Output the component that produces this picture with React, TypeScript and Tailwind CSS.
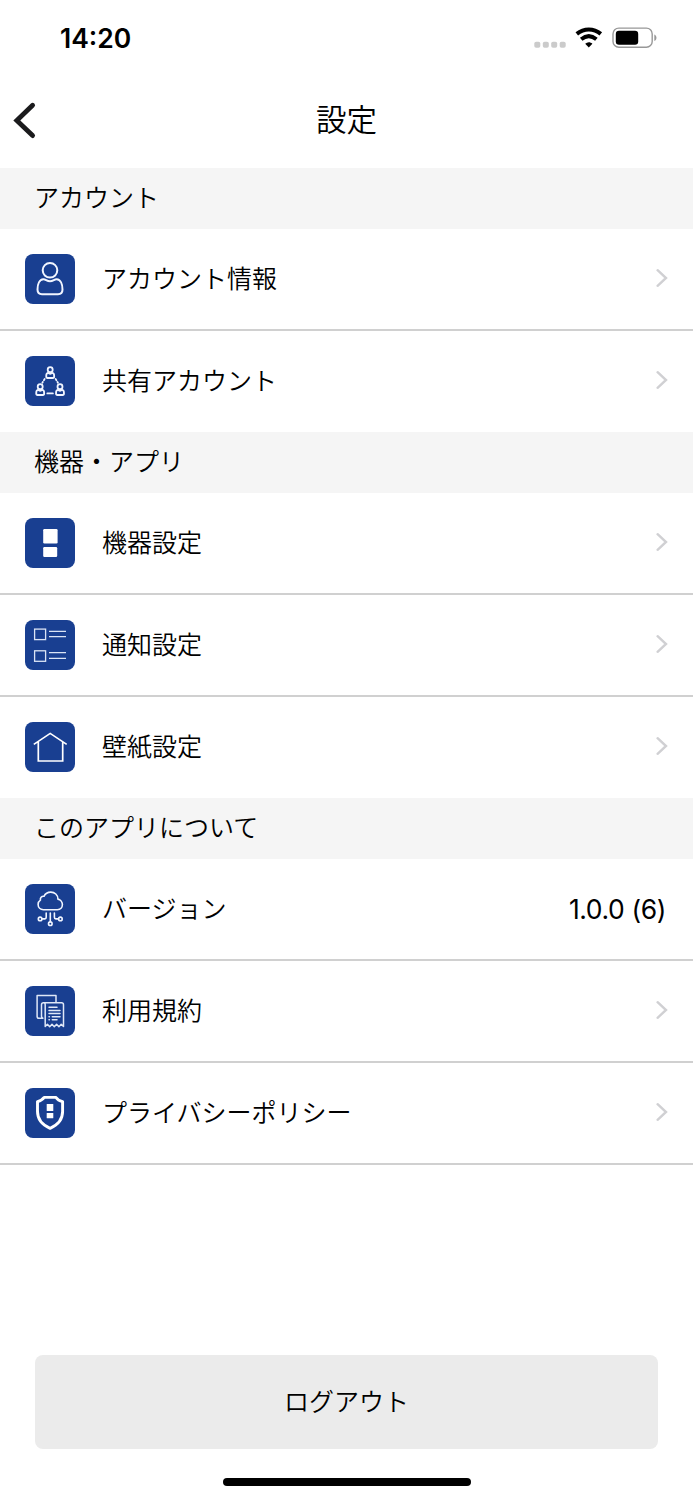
import type { ReactNode } from "react";

const line = {
  fill: "none",
  stroke: "#f1f5ff",
  strokeLinecap: "round" as const,
  strokeLinejoin: "round" as const,
};

function Tile({ children }: { children: ReactNode }) {
  return (
    <svg className="size-[50px] shrink-0 rounded-[8px] bg-[#193f91]" viewBox="0 0 50 50">
      {children}
    </svg>
  );
}

function UserIcon() {
  return (
    <Tile>
      <g {...line} strokeWidth="2">
        <circle cx="25" cy="16.3" r="7.3" />
        <path d="M18.3 25.2C14.5 25.5 12.5 30 12.5 35.5C12.5 38.8 14.1 40.2 17 40.2H33C35.9 40.2 37.5 38.8 37.5 35.5C37.5 30 35.5 25.5 31.7 25.2C29.3 25.1 28.3 27.3 25 27.3C21.7 27.3 20.7 25.1 18.3 25.2Z" />
      </g>
    </Tile>
  );
}

function MiniUser({ x, y }: { x: number; y: number }) {
  return (
    <g transform={`translate(${x} ${y})`}>
      <circle cx="0" cy="0" r="2.5" />
      <path d="M-2.3 3.2C-3.5 3.4-4 4.9-4 6.6C-4 7.9-3.6 8.3-2.6 8.3H2.6C3.6 8.3 4 7.9 4 6.6C4 4.9 3.5 3.4 2.3 3.2C1.5 3.2 1.1 4.1 0 4.1C-1.1 4.1-1.5 3.2-2.3 3.2Z" />
    </g>
  );
}

function SharedIcon() {
  return (
    <Tile>
      <g {...line} strokeWidth="1.8">
        <MiniUser x={25.2} y={13.7} />
        <MiniUser x={15.2} y={30.7} />
        <MiniUser x={35} y={30.7} />
        <path d="M19.7 22.9L18.9 24.2M17.8 26L17.4 26.7M30.6 22.9L31.4 24.2M32.5 26L32.9 26.7M22.3 37.4H27.9" />
      </g>
    </Tile>
  );
}

function DeviceIcon() {
  return (
    <Tile>
      <rect x="18.2" y="11" width="14.4" height="14.4" rx="1.2" fill="#fff" />
      <rect x="18.2" y="29" width="14" height="10" rx="1.2" fill="#fff" />
    </Tile>
  );
}

function NoticeIcon() {
  return (
    <Tile>
      <g fill="none" stroke="#dbe4f5" strokeWidth="1.3">
        <rect x="9.6" y="9.1" width="11" height="10.5" />
        <rect x="9.6" y="30.8" width="11" height="10.5" />
        <path d="M24 11.3H41M24 16.7H41M24 32.6H41M24 38.4H41" />
      </g>
    </Tile>
  );
}

function HouseIcon() {
  return (
    <Tile>
      <path
        d="M8.8 22.4L25.2 11.4L41.7 22.4M13.3 20V39H37.7V20"
        fill="none"
        stroke="#fff"
        strokeWidth="1.7"
      />
    </Tile>
  );
}

function CloudIcon() {
  return (
    <Tile>
      <g {...line} strokeWidth="1.6">
        <path d="M18.4 25.7H32.4C35.4 25.7 37.4 23.3 37.4 20.6C37.4 17.8 35.2 15.6 32.9 15.1C33 10.9 29.6 8.1 25.8 8.1C22.7 8.1 20.2 9.7 19 12.3C16.5 12 15 13.8 15.4 16.1C13.9 17 13.1 18.7 13.1 20.6C13.1 23.5 15.4 25.7 18.4 25.7Z" />
        <path d="M21.2 29V33.3C21.2 34.4 20.8 34.9 19.9 34.9H17.2M25.3 29V37.7M29.4 29V33.3C29.4 34.4 29.8 34.9 30.7 34.9H33.4" />
        <circle cx="15.1" cy="34.9" r="1.8" />
        <circle cx="35.4" cy="34.9" r="1.8" />
        <circle cx="25.3" cy="39.7" r="1.8" />
      </g>
    </Tile>
  );
}

function TermsIcon() {
  return (
    <Tile>
      <g {...line} stroke="#dfe7f7" strokeWidth="1.5">
        <path d="M31 16.5V9.5H12.1V30.5C12.1 31.7 12.9 32.3 14 32.3H17.9C16.9 32 16.5 31.4 16.5 30V18.8C16.5 17.4 17.4 16.8 18.6 16.8H36.5C37.7 16.8 38.5 17.6 38.5 18.8V40.5L36.2 38.3L33.9 40.7L31.6 38.3L29.3 40.7L27 38.3L24.7 40.7L22.4 38.3L20.2 40.5V18.8C20.2 17.6 19.7 16.8 18.6 16.8" />
        <path d="M24 21.2H32M24 24.4H35M24 27.5H35M24 30.7H24.4M27.3 30.7H35M24 33.8H24.4M27.3 33.8H32" />
      </g>
    </Tile>
  );
}

function ShieldIcon() {
  return (
    <Tile>
      <path
        d="M19.2 9.4H31C32.2 11.3 34.6 12.8 37.6 13.6V23.5C37.6 31 33.6 36.6 25.1 40.3C16.6 36.6 12.5 31 12.5 23.5V13.6C15.4 12.8 17.9 11.3 19.2 9.4Z"
        fill="none"
        stroke="#fff"
        strokeWidth="2.9"
        strokeLinejoin="round"
      />
      <rect x="21.7" y="16.1" width="6.6" height="6.8" rx=".5" fill="#fff" />
      <rect x="21.7" y="24.9" width="6.6" height="5.4" rx=".5" fill="#fff" />
    </Tile>
  );
}

function Chevron() {
  return (
    <svg className="mb-[2px] h-[20px] w-[12px]" viewBox="0 0 12 20">
      <path d="M1.6 2.2L10 10L1.6 17.8" fill="none" stroke="#d0d0d3" strokeWidth="2.4" strokeLinecap="round" strokeLinejoin="miter" />
    </svg>
  );
}

function StatusBar() {
  return (
    <div className="flex h-[76px] items-center justify-between pl-[60px] pr-[36px]">
      <span className="pt-px font-['Inter',sans-serif] text-[26.5px] font-semibold leading-none">14:20</span>
      <svg className="h-[24px] w-[124px] overflow-visible" viewBox="0 0 124 24">
        <g fill="#cbcbcb">
          <rect x="1.3" y="15.8" width="6" height="6" rx="1.8" />
          <rect x="9.8" y="15.8" width="6" height="6" rx="1.8" />
          <rect x="18.2" y="15.8" width="6" height="6" rx="1.8" />
          <rect x="26.7" y="15.8" width="6" height="6" rx="1.8" />
        </g>
        <path d="M43.8 7.9C51 1.9 60.6 1.9 67.8 7.9" fill="none" stroke="#000" strokeWidth="4" />
        <path d="M48.2 13.2C53 9.3 58.6 9.3 63.4 13.2" fill="none" stroke="#000" strokeWidth="4" />
        <path d="M52.2 17.7C54.4 15.7 57.2 15.7 59.4 17.7L55.8 21.6Z" fill="#000" />
        <rect x="80" y="2.1" width="39.2" height="19.2" rx="5.8" fill="none" stroke="#989898" strokeWidth="1.4" />
        <rect x="82.8" y="4.8" width="22.4" height="14" rx="3.2" fill="#000" />
        <path d="M121.3 8.4C124.2 9.6 124.2 13.9 121.3 15.1Z" fill="#989898" />
      </svg>
    </div>
  );
}

function Section({ title, children }: { title: string; children: ReactNode }) {
  return (
    <section>
      <h2 className="flex h-[61px] items-center bg-[#f5f5f5] pb-[5px] pl-[34px] text-[25px]">{title}</h2>
      {children}
    </section>
  );
}

function Row({ icon, label, value, last }: { icon: ReactNode; label: string; value?: string; last?: boolean }) {
  return (
    <div
      className={
        last
          ? "flex h-[101px] items-center pb-px pl-[25px] pr-[25px]"
          : "flex h-[102px] items-center border-b-2 border-[#d0d0d0] pl-[25px] pr-[25px]"
      }
    >
      {icon}
      <span className="ml-[27px] flex-1 pb-[4px] text-[25px]">{label}</span>
      {value ? (
        <span className="pr-[2px] font-['Inter',sans-serif] text-[26.5px] font-normal tracking-[-0.4px]">{value}</span>
      ) : (
        <Chevron />
      )}
    </div>
  );
}

export default function App() {
  return (
    <div className="flex h-[1500px] w-[693px] flex-col bg-white font-['Noto_Sans_CJK_JP',sans-serif] font-[350] leading-none text-black">
      <StatusBar />
      <header className="grid h-[92px] grid-cols-[100px_1fr_100px] items-center">
        <svg className="mb-[4px] ml-[12px] h-[38px] w-[24px]" viewBox="0 0 24 38">
          <path d="M20.6 4.2L4.8 19.4L20.6 34.6" fill="none" stroke="#1b1b1d" strokeWidth="4.8" strokeLinecap="round" strokeLinejoin="miter" />
        </svg>
        <h1 className="pb-[7px] text-center text-[30.5px]">設定</h1>
      </header>
      <Section title="アカウント">
        <Row icon={<UserIcon />} label="アカウント情報" />
        <Row icon={<SharedIcon />} label="共有アカウント" last />
      </Section>
      <Section title="機器・アプリ">
        <Row icon={<DeviceIcon />} label="機器設定" />
        <Row icon={<NoticeIcon />} label="通知設定" />
        <Row icon={<HouseIcon />} label="壁紙設定" last />
      </Section>
      <Section title="このアプリについて">
        <Row icon={<CloudIcon />} label="バージョン" value="1.0.0 (6)" />
        <Row icon={<TermsIcon />} label="利用規約" />
        <Row icon={<ShieldIcon />} label="プライバシーポリシー" />
      </Section>
      <footer className="mt-auto flex flex-col items-center px-[35px] pb-[14px]">
        <button className="flex h-[94px] w-full items-center justify-center rounded-[8px] bg-[#ebebeb] pb-[4px] text-[25px]">
          ログアウト
        </button>
        <div className="mt-[29px] h-[8px] w-[248px] rounded-full bg-black" />
      </footer>
    </div>
  );
}
